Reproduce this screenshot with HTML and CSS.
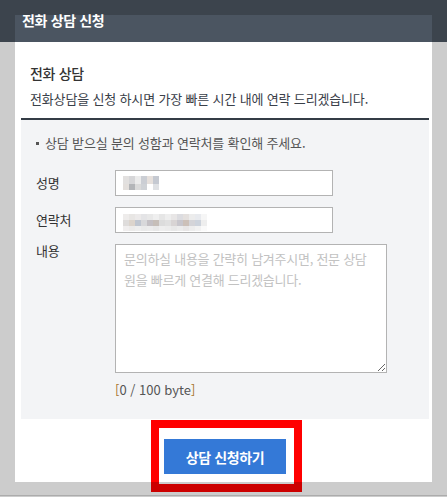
FILE: index.html
```html
<!DOCTYPE html>
<html lang="ko">
<head>
<meta charset="utf-8">
<title>전화 상담 신청</title>
<link rel="stylesheet" href="styles.css">
</head>
<body>
<div class="screen">
  <div class="modal">
    <div class="modal-head">
      <h1 class="modal-title">전화 상담 신청</h1>
    </div>
    <div class="modal-body">
      <div class="intro">
        <h2 class="intro-title">전화 상담</h2>
        <p class="intro-text">전화상담을 신청 하시면 가장 빠른 시간 내에 연락 드리겠습니다.</p>
      </div>
      <div class="form-box">
        <p class="notice"><span class="bullet"></span>상담 받으실 분의 성함과 연락처를 확인해 주세요.</p>
        <div class="form-grid">
          <span class="form-label">성명</span>
          <div class="field"><span class="blur blur-name"></span></div>
          <span class="form-label">연락처</span>
          <div class="field"><span class="blur blur-phone"></span></div>
          <span class="form-label label-top">내용</span>
          <textarea class="memo" placeholder="문의하실 내용을 간략히 남겨주시면, 전문 상담&#10;원을 빠르게 연결해 드리겠습니다."></textarea>
        </div>
        <p class="counter"><span class="bracket">[</span>0 / 100 byte<span class="bracket">]</span></p>
      </div>
      <div class="action">
        <div class="highlight">
          <button class="submit" type="button">상담 신청하기</button>
        </div>
      </div>
    </div>
  </div>
</div>
</body>
</html>
```
FILE: styles.css
```css
html {
  background: #cccccc;
}
body {
  margin: 0;
  font-family: "Noto Sans CJK KR", "Noto Sans", sans-serif;
  letter-spacing: -0.01em;
}
.screen {
  height: 496px;
  box-sizing: border-box;
  padding: 15px 15px 0;
  background: linear-gradient(#3c444d 0 42px, #cccccc 42px);
  border-bottom: 1px solid #acacac;
}
.modal {
  width: 417px;
  height: 467px;
  background: #fff;
}
.modal-head {
  height: 27px;
  background: #4b5561;
  padding-left: 7px;
}
.modal-title {
  margin: 0;
  position: relative;
  top: -5px;
  font-size: 14px;
  line-height: 20px;
  font-weight: 700;
  letter-spacing: -0.025em;
  color: #fff;
}
.modal-body {
  padding: 0 3px 0 6px;
}
.intro {
  padding: 21px 0 9px 9px;
  border-bottom: 2px solid #343c46;
}
.intro-title {
  margin: 0;
  font-size: 14px;
  line-height: 20px;
  font-weight: 500;
  letter-spacing: -0.025em;
  color: #333;
}
.intro-text {
  margin: 6px 0 0;
  font-size: 13px;
  line-height: 20px;
  color: #3a4049;
}
.form-box {
  background: #f3f4f6;
  padding: 13px 0 19px 15px;
}
.notice {
  margin: 0 0 17px;
  display: flex;
  align-items: center;
  gap: 6px;
  font-size: 13px;
  line-height: 20px;
  color: #555;
}
.bullet {
  width: 3px;
  height: 3px;
  background: #555;
}
.form-grid {
  display: grid;
  grid-template-columns: 79px auto;
  row-gap: 11px;
  justify-items: start;
  align-items: center;
}
.form-label {
  font-size: 13px;
  line-height: 20px;
  color: #333;
}
.label-top {
  align-self: start;
  margin-top: -3px;
}
.field {
  width: 218px;
  height: 26px;
  box-sizing: border-box;
  border: 1px solid #b3b3b3;
  background: #fff;
  padding: 5px 0 0 7px;
}
.blur {
  display: block;
}
.blur-name {
  width: 36px;
  height: 14px;
  background:
    linear-gradient(90deg, #e2e0df 0 6px, #d6d6d8 6px 12px, #ebebeb 12px 18px, #cbced4 18px 24px, #e6e0dc 24px 30px, #c5c9d1 30px 36px) top / 100% 8px no-repeat,
    linear-gradient(90deg, #e3dfdc 0 6px, #b3b5b8 6px 12px, #dadada 12px 18px, #cfd2d6 18px 24px, #fff 24px 30px, #dfe1e4 30px 36px) bottom / 100% 6px no-repeat;
}
.blur-phone {
  width: 84px;
  height: 17px;
  margin-top: 1px;
  background:
    linear-gradient(90deg, #eeeceb 0 6px, #e8e6e4 6px 12px, #eceaea 12px 18px, #e4e4e6 18px 24px, #e8e8e8 24px 30px, #efefef 30px 36px, #e6e6e6 36px 42px, #eeeeee 42px 48px, #e8e6e6 48px 54px, #dcdce0 54px 60px, #e4e0de 60px 66px, #ececec 66px 72px, #e8eaee 72px 78px, #f6f6f6 78px 84px) top / 100% 6px no-repeat,
    linear-gradient(90deg, #dedcdb 0 6px, #dcd4cc 6px 12px, #c0c6d0 12px 18px, #d8d8da 18px 24px, #c4c0c4 24px 30px, #c6beb8 30px 36px, #dcdcdc 36px 42px, #e0e0e0 42px 48px, #d8d4d4 48px 54px, #c8c6cc 54px 60px, #ccc0b8 60px 66px, #d4d4d8 66px 72px, #cdd3dc 72px 78px, #eeeeee 78px 84px) center / 100% 6px no-repeat,
    linear-gradient(90deg, #f0eeee 0 6px, #ecebea 6px 12px, #eeeeee 12px 18px, #eaeaea 18px 24px, #ececec 24px 30px, #e8e8e8 30px 36px, #eeeeee 36px 42px, #ececec 42px 48px, #e8e8e8 48px 54px, #ececec 54px 60px, #e8e6e6 60px 66px, #ededed 66px 72px, #f2f2f2 72px 78px, #fafafa 78px 84px) bottom / 100% 5px no-repeat;
}
.memo {
  display: block;
  margin: 0;
  width: 272px;
  height: 129px;
  box-sizing: border-box;
  border: 1px solid #b3b3b3;
  border-radius: 0;
  background: #fff;
  padding: 3px 8px;
  font-family: inherit;
  font-size: 13px;
  line-height: 21px;
  letter-spacing: -0.02em;
  color: #333;
  resize: both;
}
.memo::placeholder {
  color: #c2c2c2;
}
.counter {
  margin: 7px 0 0 79px;
  font-size: 13px;
  line-height: 20px;
  letter-spacing: 0;
  color: #555;
}
.bracket {
  color: #a8742e;
}
.action {
  margin-top: 1px;
}
.highlight {
  position: relative;
  width: fit-content;
  margin-left: 130px;
  border: 8px solid #ff0000;
  padding: 11px 8px 10px 5px;
  background: #fff;
}
.highlight::after {
  content: "";
  position: absolute;
  left: -8px;
  right: -8px;
  bottom: -8px;
  height: 10px;
  background: rgba(0, 0, 0, 0.2);
}
.submit {
  display: block;
  width: 122px;
  height: 35px;
  border: 0;
  border-radius: 0;
  background: #3479d7;
  color: #fff;
  font-family: inherit;
  font-size: 14px;
  font-weight: 700;
  letter-spacing: -0.025em;
  cursor: pointer;
}
```
